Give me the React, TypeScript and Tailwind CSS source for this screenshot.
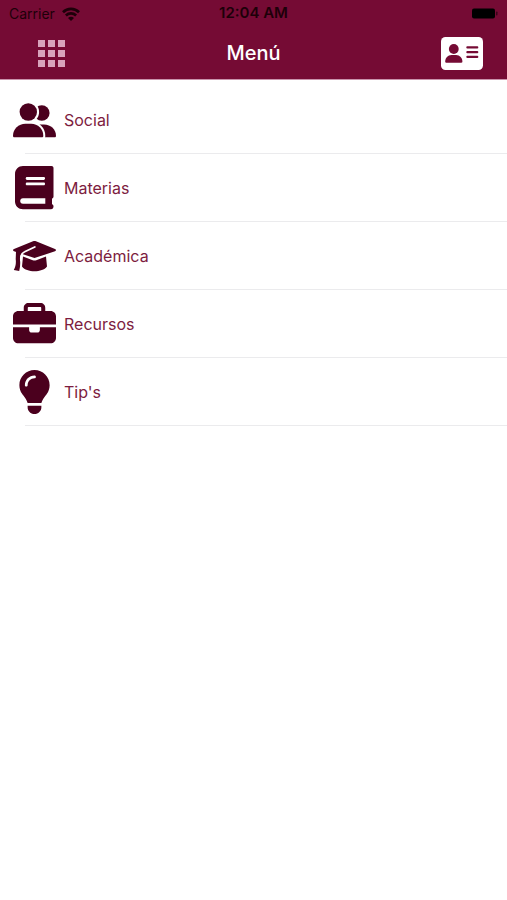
import React from "react";
import { FaBriefcase, FaLightbulb } from "react-icons/fa6";

function UsersIcon() {
  return (
    <svg className="h-[35px] w-[43px]" viewBox="0 0 43 35" fill="currentColor" aria-hidden="true">
      <circle cx="28.8" cy="10" r="7.8" />
      <path d="M26.5 21.5H31c7 0 12 5 12 11.4 0 .9-.6 1.4-1.4 1.4H28z" />
      <circle cx="15.3" cy="9" r="8.6" stroke="#fff" strokeWidth="4.4" />
      <circle cx="15.3" cy="9" r="8.7" />
      <path
        d="M12.5 20.8h5.6C25 20.8 30.3 26 30.3 32.9c0 .9-.6 1.4-1.4 1.4H1.4C.6 34.3 0 33.8 0 32.9 0 26 5.5 20.8 12.5 20.8z"
        stroke="#fff"
        strokeWidth="4"
      />
      <path d="M12.5 20.8h5.6C25 20.8 30.3 26 30.3 32.9c0 .9-.6 1.4-1.4 1.4H1.4C.6 34.3 0 33.8 0 32.9 0 26 5.5 20.8 12.5 20.8z" />
    </svg>
  );
}

function BookIcon() {
  return (
    <svg className="h-11 w-[39px]" viewBox="0 0 39 44" fill="currentColor" aria-hidden="true">
      <path d="M8 0h28.5C37.7 0 38.5.8 38.5 2v28.5c0 1-.6 1.800-1.500 2.200v5.600c1 .3 1.500 1.100 1.500 2.200 0 1.500-1 2.700-2.500 2.700H8c-4.500 0-8-3.200-8-7.700V8C0 3.500 3.500 0 8 0z" />
      <path
        fill="#fff"
        d="M8 32.3h22.3v5.500H8c-3.700 0-3.700-5.500 0-5.500zM12 11.100h16.800c1.700 0 1.700 2.800 0 2.800H12c-1.700 0-1.700-2.800 0-2.800zM12 16.500h16.800c1.700 0 1.700 2.800 0 2.800H12c-1.700 0-1.700-2.800 0-2.800z"
      />
    </svg>
  );
}

function CapIcon() {
  return (
    <svg className="h-8 w-[43px]" viewBox="0 0 43 32" fill="currentColor" aria-hidden="true">
      <path d="M20 1.200c1-.4 2-.4 3 0l19 7.700c1.300.6 1.300 1.800 0 2.400l-19 6.300c-1 .4-2 .4-3 0L1 11.300c-1.300-.6-1.300-1.800 0-2.400z" />
      <path d="M10 16.500l9.700 3.700c1.200.5 2.400.5 3.600 0l9.700-3.700 1 10c-2.500 3.300-7.200 4.700-12.500 4.700S11.500 29.800 9 26.500z" />
      <path d="M3 11.500h5.500L7 19c.4 4 .3 8-.8 12L.8 30C2.700 26.500 3.200 23 2.700 19z" />
      <path
        d="M8 20.500c-.6-4.500.5-7.300 3.700-8.700L21.800 7"
        fill="none"
        stroke="#fff"
        strokeWidth="1.8"
        strokeLinecap="round"
      />
    </svg>
  );
}

function CardIcon() {
  return (
    <svg className="h-[33px] w-[42px]" viewBox="0 0 42 33" aria-hidden="true">
      <rect width="42" height="33" rx="4.5" fill="#fff" />
      <g fill="#750b34">
        <circle cx="12.8" cy="12" r="4.900" />
        <path d="M10.500 18h4.600c3.700 0 6.300 3 6.300 6.600 0 .8-.4 1.200-1 1.200H5.200c-.6 0-1-.4-1-1.200 0-3.600 2.600-6.600 6.300-6.600z" />
        <rect x="25.300" y="9.200" width="12" height="2.300" rx="1" />
        <rect x="25.300" y="14" width="12" height="2.300" rx="1" />
        <rect x="25.300" y="18.800" width="12" height="2.300" rx="1" />
      </g>
    </svg>
  );
}

function WifiIcon() {
  return (
    <svg className="h-[14px] w-[18px]" viewBox="0 0 18 14" fill="none" stroke="currentColor" strokeWidth="2.7" aria-hidden="true">
      <path d="M1 5.200c4.500-4.300 11.500-4.300 16 0M3.900 8.400c2.900-2.700 7.300-2.700 10.200 0" />
      <path d="M6 10.900c1.700-1.500 4.300-1.500 6 0L9 14z" fill="currentColor" stroke="none" />
    </svg>
  );
}

const items = [
  { label: "Social", icon: <UsersIcon /> },
  { label: "Materias", icon: <BookIcon /> },
  { label: "Académica", icon: <CapIcon /> },
  { label: "Recursos", icon: <FaBriefcase className="h-[43px] w-[43px]" /> },
  { label: "Tip's", icon: <FaLightbulb className="h-11 w-[33px]" /> },
];

function StatusBar() {
  return (
    <div className="grid h-[27px] grid-cols-3 items-center px-[9px] text-[#1d0009]">
      <div className="flex items-center gap-[7px] text-sm">
        <span>Carrier</span>
        <WifiIcon />
      </div>
      <span className="text-center text-[15px] font-semibold">12:04 AM</span>
      <svg className="h-[11px] w-[28px] justify-self-end" viewBox="0 0 28 11" aria-hidden="true">
        <rect x="2" y="0.5" width="23" height="10" rx="2" fill="#000" />
        <rect x="26" y="3.5" width="1.5" height="4" rx="0.7" fill="#3c0419" />
      </svg>
    </div>
  );
}

export default function App() {
  return (
    <div className="min-h-screen bg-white font-['Inter','Liberation_Sans',sans-serif]">
      <header className="border-b border-[#c993ab] bg-[#750b34]">
        <StatusBar />
        <div className="grid h-[52px] grid-cols-3 items-center px-6">
          <button type="button" aria-label="Módulos" className="justify-self-start pl-[14px]">
            <svg className="h-[27px] w-[27px]" viewBox="0 0 27 27" fill="#d8a3bb" aria-hidden="true">
              {[0, 10, 20].map((y) =>
                [0, 10, 20].map((x) => <rect key={`${x}-${y}`} x={x} y={y} width="7" height="7" />),
              )}
            </svg>
          </button>
          <h1 className="text-center text-xl font-medium text-white">Menú</h1>
          <button type="button" aria-label="Credencial" className="justify-self-end">
            <CardIcon />
          </button>
        </div>
      </header>
      <nav className="pt-[6px]">
        <ul>
          {items.map((item) => (
            <li key={item.label} className="after:ml-[25px] after:block after:h-px after:bg-[#ebebed]">
              <a href="#" className="flex h-[67px] items-center gap-2 pl-[13px] text-base text-[#7d1c40]">
                <span className="flex w-[43px] justify-center pt-px text-[#4b001e]">{item.icon}</span>
                {item.label}
              </a>
            </li>
          ))}
        </ul>
      </nav>
    </div>
  );
}
